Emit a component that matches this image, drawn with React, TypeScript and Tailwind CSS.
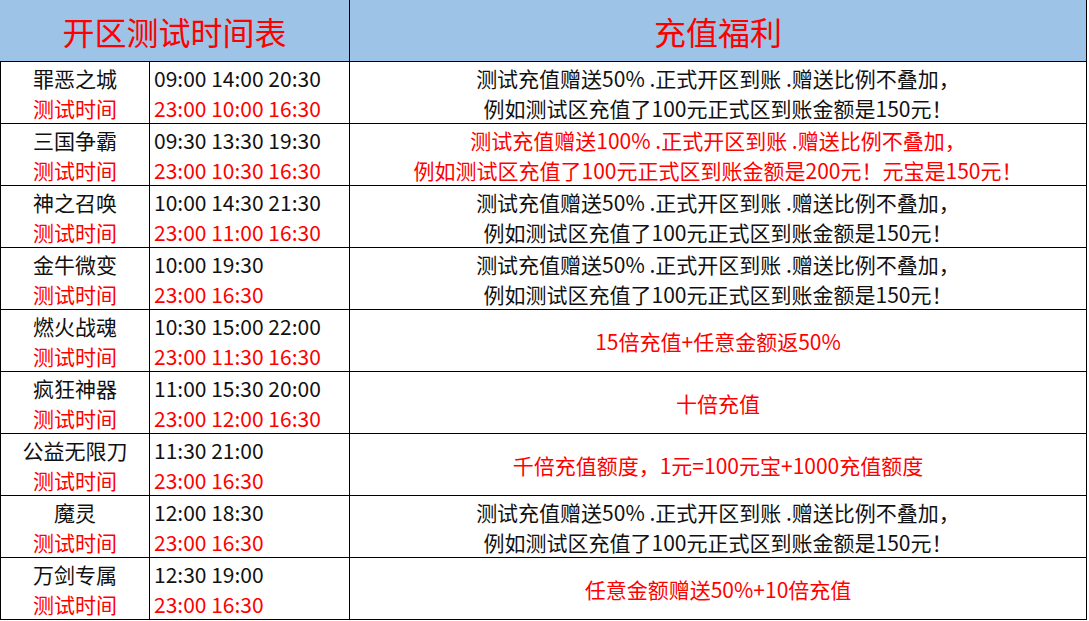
const rows = [
  { name: "罪恶之城", times: "09:00 14:00 20:30", test: "23:00 10:00 16:30", benefit: ["测试充值赠送50% .正式开区到账 .赠送比例不叠加，", "例如测试区充值了100元正式区到账金额是150元！"], red: false },
  { name: "三国争霸", times: "09:30 13:30 19:30", test: "23:00 10:30 16:30", benefit: ["测试充值赠送100% .正式开区到账 .赠送比例不叠加，", "例如测试区充值了100元正式区到账金额是200元！元宝是150元！"], red: true },
  { name: "神之召唤", times: "10:00 14:30 21:30", test: "23:00 11:00 16:30", benefit: ["测试充值赠送50% .正式开区到账 .赠送比例不叠加，", "例如测试区充值了100元正式区到账金额是150元！"], red: false },
  { name: "金牛微变", times: "10:00 19:30", test: "23:00 16:30", benefit: ["测试充值赠送50% .正式开区到账 .赠送比例不叠加，", "例如测试区充值了100元正式区到账金额是150元！"], red: false },
  { name: "燃火战魂", times: "10:30 15:00 22:00", test: "23:00 11:30 16:30", benefit: ["15倍充值+任意金额返50%"], red: true },
  { name: "疯狂神器", times: "11:00 15:30 20:00", test: "23:00 12:00 16:30", benefit: ["十倍充值"], red: true },
  { name: "公益无限刀", times: "11:30 21:00", test: "23:00 16:30", benefit: ["千倍充值额度，1元=100元宝+1000充值额度"], red: true },
  { name: "魔灵", times: "12:00 18:30", test: "23:00 16:30", benefit: ["测试充值赠送50% .正式开区到账 .赠送比例不叠加，", "例如测试区充值了100元正式区到账金额是150元！"], red: false },
  { name: "万剑专属", times: "12:30 19:00", test: "23:00 16:30", benefit: ["任意金额赠送50%+10倍充值"], red: true },
];

export default function App() {
  return (
    <div
      className="w-[1089px] h-[621px] bg-white text-[21px] leading-[30px]"
      style={{ fontFamily: '"Noto Sans CJK SC", "Noto Sans", sans-serif' }}
    >
      <div className="w-[1087px]">
        <div className="flex h-[62px] bg-[#9dc3e6] border-b border-black text-[32px] text-[#ff0000]">
          <div className="w-[350px] flex items-center justify-center border-r border-black">
            开区测试时间表
          </div>
          <div className="flex-1 flex items-center justify-center border-r border-black">
            充值福利
          </div>
        </div>
        {rows.map((r) => (
          <div key={r.name} className="flex h-[62px] border-b border-l border-black">
            <div className="w-[149px] flex flex-col justify-center items-center border-r border-black">
              <span className="text-[#111]">{r.name}</span>
              <span className="text-[#ff0000]">测试时间</span>
            </div>
            <div className="w-[200px] flex flex-col justify-center pl-[4px] border-r border-black">
              <span className="text-[#111]">{r.times}</span>
              <span className="text-[#ff0000]">{r.test}</span>
            </div>
            <div
              className={`flex-1 flex flex-col justify-center items-center border-r border-black ${
                r.red ? "text-[#ff0000]" : "text-[#111]"
              }`}
            >
              {r.benefit.map((b) => (
                <span key={b}>{b}</span>
              ))}
            </div>
          </div>
        ))}
      </div>
    </div>
  );
}
